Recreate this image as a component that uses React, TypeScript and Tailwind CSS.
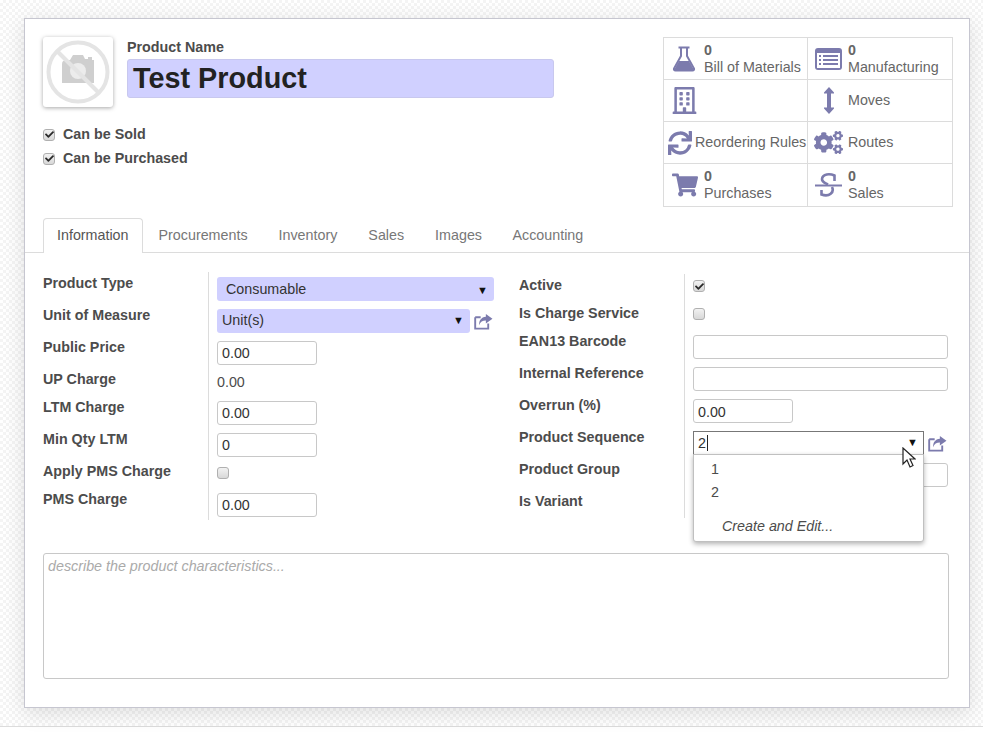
import React from "react";
import { FaRegBuilding, FaSync, FaCogs, FaShoppingCart, FaCheck } from "react-icons/fa";

function Check({ on, className = "" }: { on?: boolean; className?: string }) {
  return (
    <span className={`flex h-[12px] w-[12px] shrink-0 items-center justify-center rounded-[3px] border border-[#b0b0b0] bg-gradient-to-b from-[#f2f2f2] to-[#d8d8d8] ${className}`}>
      {on && <FaCheck className="h-[9px] w-[9px] text-[#2a2a2a]" />}
    </span>
  );
}

function Input({ value, w = "w-[100px]", leading = "leading-[22px]" }: { value?: string; w?: string; leading?: string }) {
  return (
    <div className={`h-[24px] ${w} rounded-[3px] border border-[#c8c8c8] bg-white px-[4px] text-[14.3px] ${leading} text-[#333]`}>{value}</div>
  );
}

function Caret() {
  return <span className="text-[11px] leading-none text-[#111]">▼</span>;
}

function Share() {
  return (
    <svg viewBox="0 0 20 18" className="h-[17px] w-[19px] text-[#7c7bad]">
      <path d="M1.2 4.5 H7 M1.2 4.5 V16.5 H15 V11" fill="none" stroke="currentColor" strokeWidth="2" />
      <path d="M12.5 1 L19.5 6 L12.5 11 V8 C9 8 6.5 9.5 5.5 13 C5 8 7.5 4.5 12.5 4 Z" fill="currentColor" />
    </svg>
  );
}

function Row({ label, h, first, children }: { label: string; h: string; first?: boolean; children?: React.ReactNode }) {
  return (
    <div className={`flex ${h}`}>
      <div className={`w-[166px] shrink-0 border-r border-[#dcdcdc] text-[14.3px] font-bold leading-[20px] text-[#4c4c4c] ${first ? "pt-[1px]" : ""}`}>{label}</div>
      <div className={`flex min-w-0 flex-1 items-center pl-[8px] ${first ? "pt-[1px]" : ""}`}>{children}</div>
    </div>
  );
}

function Stat({ icon, count, label, h, pad = "pl-[40px]", iconLeft = "left-[8px]", border = "" }: { icon: React.ReactNode; count?: string; label?: string; h: string; pad?: string; iconLeft?: string; border?: string }) {
  return (
    <div className={`relative flex ${h} flex-col justify-center ${pad} ${border} border-[#dcdcdc] text-[14.3px] leading-[17px] text-[#666]`}>
      <span className={`absolute top-0 flex h-full items-center ${iconLeft} text-[#7c7bad]`}>{icon}</span>
      {count && <span className="font-bold">{count}</span>}
      {label && <span className="whitespace-nowrap">{label}</span>}
    </div>
  );
}

function FlaskIcon() {
  return (
    <svg viewBox="0 0 24 26" className="h-[26px] w-[24px]">
      <path d="M6.5 1.5 H17.5 M9 1.5 V10 L2 22.5 Q1.5 24.5 3.5 24.5 H20.5 Q22.5 24.5 22 22.5 L15 10 V1.5" fill="none" stroke="currentColor" strokeWidth="2" />
      <path d="M7 15 H17 L22 24 Q22 25 20.5 25 H3.5 Q2 25 2 24 Z" fill="currentColor" />
    </svg>
  );
}

function ListIcon() {
  return (
    <svg viewBox="0 0 27 22" className="h-[22px] w-[27px]">
      <rect x="0" y="0" width="27" height="22" rx="3" fill="currentColor" />
      <rect x="2" y="5" width="23" height="15" fill="#fff" />
      <path d="M4 8 H6 M4 12 H6 M4 16 H6 M8 8 H23 M8 12 H23 M8 16 H23" stroke="currentColor" strokeWidth="2" />
    </svg>
  );
}

function ArrowIcon() {
  return (
    <svg viewBox="0 0 10 27" className="h-[27px] w-[10px]">
      <path d="M5 0 L10 5.5 V6.5 H7 V20.5 H10 V21.5 L5 27 L0 21.5 V20.5 H3 V6.5 H0 V5.5 Z" fill="currentColor" />
    </svg>
  );
}

function StrikeIcon() {
  return (
    <svg viewBox="0 0 28 26" className="h-[26px] w-[28px]">
      <path d="M19.5 9 V3.5 C15 1.5 7.5 1.5 7 7 C6.8 10 10 11 13 12.5" fill="none" stroke="currentColor" strokeWidth="2.6" />
      <path d="M17 15 C19.5 20 14.5 25.5 6.5 22.5 V18" fill="none" stroke="currentColor" strokeWidth="2.6" />
      <path d="M0 13.5 H27" stroke="currentColor" strokeWidth="2" />
    </svg>
  );
}

export default function App() {
  return (
    <div className="min-h-[744px] bg-white font-['Liberation_Sans',Arial,sans-serif]">
      <div className="h-[727px] border-b border-[#dcdcdc] bg-[repeating-conic-gradient(#f4f4f4_0_25%,#ffffff_0_50%)] bg-[length:6px_6px] pt-[18px]">
        <div className="mx-[24px] h-[690px] w-[946px] border border-[#c6c6d0] bg-white shadow-[0_5px_20px_rgba(0,0,0,0.12)]">
          <div className="flex h-[199px] pl-[18px] pr-[16px] pt-[18px]">
            <div className="w-[620px] shrink-0">
              <div className="flex">
                <div className="flex h-[70px] w-[70px] items-center justify-center rounded-[3px] bg-white shadow-[0_1px_4px_rgba(0,0,0,0.35)]">
                  <svg viewBox="0 0 64 64" className="h-[64px] w-[64px]">
                    <circle cx="32" cy="32" r="29.5" fill="none" stroke="#e4e4e4" strokeWidth="4" />
                    <path d="M16 24 C16 21 18 20 20 20 H24 L27 15 H37 L39 19 H42 V17 H46 V20 H48 V43 H16 Z" fill="#cfcfcf" />
                    <circle cx="32" cy="31" r="8" fill="#ececec" />
                    <path d="M11 11 L53 53" stroke="#e4e4e4" strokeWidth="4" />
                  </svg>
                </div>
                <div className="ml-[14px]">
                  <div className="mt-[1px] text-[14.3px] font-bold leading-[18px] text-[#4c4c4c]">Product Name</div>
                  <div className="mt-[3px] h-[39px] w-[427px] rounded-[3px] border border-[#c8c8ee] bg-[#d0d0ff] pl-[5px] text-[28.8px] font-bold leading-[37px] text-[#222]">Test Product</div>
                </div>
              </div>
              <div className="mt-[16px] flex h-[24px] items-center gap-[8px] text-[14.3px] font-bold text-[#4c4c4c]"><Check on className="mb-[1px]" />Can be Sold</div>
              <div className="flex h-[24px] items-center gap-[8px] text-[14.3px] font-bold text-[#4c4c4c]"><Check on className="mb-[1px]" />Can be Purchased</div>
            </div>
            <div className="flex h-[170px] w-[290px] flex-col border border-[#dcdcdc]">
              <div className="grid grid-cols-2">
                <Stat h="h-[41px]" border="border-r" icon={<FlaskIcon />} count="0" label="Bill of Materials" iconLeft="left-[8px]" />
                <Stat h="h-[41px]" icon={<ListIcon />} count="0" label="Manufacturing" iconLeft="left-[7px]" />
                <Stat h="h-[42px]" border="border-r border-t" icon={<FaRegBuilding className="h-[27px] w-[27px]" />} iconLeft="left-[7px]" />
                <Stat h="h-[42px]" border="border-t" icon={<ArrowIcon />} label="Moves" iconLeft="left-[16px]" />
                <Stat h="h-[42px]" border="border-r border-t" icon={<FaSync className="h-[24px] w-[24px]" />} label="Reordering Rules" pad="pl-[31px]" iconLeft="left-[4px]" />
                <Stat h="h-[42px]" border="border-t" icon={<FaCogs className="h-[29px] w-[29px]" />} label="Routes" iconLeft="left-[6px]" />
                <Stat h="h-[43px]" border="border-r border-t" icon={<FaShoppingCart className="h-[24px] w-[26px]" />} count="0" label="Purchases" />
                <Stat h="h-[43px]" border="border-t" icon={<StrikeIcon />} count="0" label="Sales" iconLeft="left-[7px]" />
              </div>
            </div>
          </div>
          <div className="flex h-[35px] border-b border-[#dcdcdc] pl-[18px] text-[14.3px] leading-[34px] text-[#777]">
            <div className="h-[35px] rounded-t-[4px] border border-b-0 border-[#dcdcdc] bg-white px-[13px] leading-[33px] text-[#555]">Information</div>
            <div className="pl-[16px] pr-[15.5px]">Procurements</div>
            <div className="px-[15.5px]">Inventory</div>
            <div className="px-[15.5px]">Sales</div>
            <div className="px-[15.5px]">Images</div>
            <div className="pl-[15px]">Accounting</div>
          </div>
          <div className="flex pl-[18px] pr-[21px] pt-[19px]">
            <div className="w-[476px] shrink-0">
              <Row first label="Product Type" h="h-[33px]">
                <div className="flex h-[24px] w-[277px] items-center justify-between rounded-[3px] bg-[#d0d0ff] pt-[2px] pl-[9px] pr-[6px] text-[14.3px] text-[#333]">Consumable<Caret /></div>
              </Row>
              <Row label="Unit of Measure" h="h-[32px]">
                <div className="flex h-[24px] w-[253px] items-center justify-between rounded-[3px] bg-[#d0d0ff] pb-[1px] pl-[5px] pr-[6px] text-[14.3px] text-[#333]">Unit(s)<Caret /></div>
                <span className="ml-[4px] flex"><Share /></span>
              </Row>
              <Row label="Public Price" h="h-[32px]"><Input value="0.00" /></Row>
              <Row label="UP Charge" h="h-[28px]"><span className="pb-[1px] text-[14.3px] text-[#4c4c4c]">0.00</span></Row>
              <Row label="LTM Charge" h="h-[32px]"><Input value="0.00" /></Row>
              <Row label="Min Qty LTM" h="h-[32px]"><Input value="0" /></Row>
              <Row label="Apply PMS Charge" h="h-[28px]"><Check className="mb-[5px]" /></Row>
              <Row label="PMS Charge" h="h-[31px]"><div className="mt-[1px]"><Input value="0.00" /></div></Row>
            </div>
            <div className="relative flex-1 pt-[2px]">
              <Row first label="Active" h="h-[29px]"><Check on className="mb-[6px]" /></Row>
              <Row label="Is Charge Service" h="h-[28px]"><Check className="mb-[6px]" /></Row>
              <Row label="EAN13 Barcode" h="h-[32px]"><Input w="w-[255px]" /></Row>
              <Row label="Internal Reference" h="h-[32px]"><Input w="w-[255px]" /></Row>
              <Row label="Overrun (%)" h="h-[32px]"><Input value="0.00" leading="leading-[24px]" /></Row>
              <Row label="Product Sequence" h="h-[32px]">
                <div className="flex h-[24px] w-[231px] items-center justify-between border border-[#777] bg-white pb-[1px] pl-[4px] pr-[5px] text-[14.3px] text-[#333]"><span className="border-r border-[#222] pr-[1px] leading-[16px]">2</span><Caret /></div>
                <span className="ml-[4px] flex"><Share /></span>
              </Row>
              <Row label="Product Group" h="h-[32px]"><Input w="w-[255px]" /></Row>
              <Row label="Is Variant" h="h-[27px]" />
              <div className="absolute left-[174px] top-[182px] h-[88px] w-[231px] rounded-b-[3px] border border-[#c0c0c0] bg-white text-[14.3px] text-[#4c4c4c] shadow-[0_2px_5px_rgba(0,0,0,0.3)]">
                <div className="pl-[17px] pt-[3px] leading-[23px]">1</div>
                <div className="pl-[17px] leading-[23px]">2</div>
                <div className="pl-[28px] pt-[11px] italic leading-[23px]">Create and Edit...</div>
              </div>
              <svg viewBox="0 0 14 22" className="absolute left-[383px] top-[175px] h-[22px] w-[14px]">
                <path d="M1 1 V17 L5 13 L8 20 L11 18.5 L8 12 H13 Z" fill="#fff" stroke="#222" strokeWidth="1.2" />
              </svg>
            </div>
          </div>
          <div className="ml-[18px] mt-[33px] h-[126px] w-[906px] rounded-[3px] border border-[#c8c8c8] px-[4px] pt-[3px] text-[14.3px] italic leading-[18px] text-[#aaa]">describe the product characteristics...</div>
        </div>
      </div>
    </div>
  );
}
